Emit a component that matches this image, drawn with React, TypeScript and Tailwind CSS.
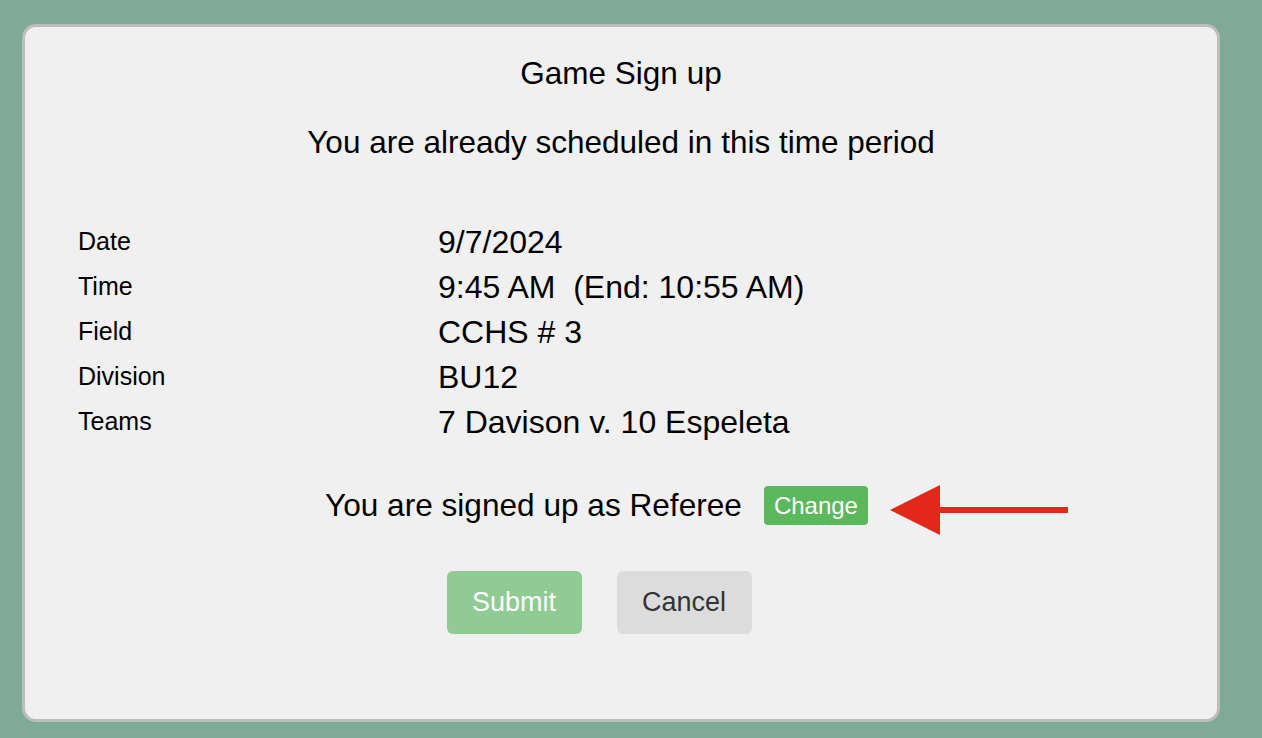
const rows = [
  { label: "Date", value: "9/7/2024" },
  { label: "Time", value: "9:45 AM\u00a0\u00a0(End: 10:55 AM)" },
  { label: "Field", value: "CCHS # 3" },
  { label: "Division", value: "BU12" },
  { label: "Teams", value: "7 Davison v. 10 Espeleta" },
];

export default function App() {
  return (
    <div className="min-h-[738px] w-full bg-[#7eaa97] pt-[24px] pb-[16px] pl-[22px] pr-[42px] font-['Liberation_Sans',Arial,sans-serif] text-black">
      <div className="relative h-[698px] rounded-[14px] border-[3px] border-[#bdbdbd] bg-[#f0f0f0] pt-[28px]">
        <h1 className="text-center text-[31.5px] leading-[36px]">Game Sign up</h1>
        <p className="mt-[33px] text-center text-[31.5px] leading-[36px]">
          You are already scheduled in this time period
        </p>

        <div className="mt-[59px] pl-[53px]">
          {rows.map((r) => (
            <div key={r.label} className="flex h-[45px] items-center">
              <span className="w-[360px] text-[25px]">{r.label}</span>
              <span className="text-[32px] whitespace-pre">{r.value}</span>
            </div>
          ))}
        </div>

        <div className="mt-[42px] flex h-[39px] items-center pl-[300px]">
          <span className="text-[31.6px]">You are signed up as Referee</span>
          <button className="ml-[22px] h-[39px] rounded-[4px] bg-[#5cb85c] px-[10px] text-[24px] text-white">
            Change
          </button>
        </div>

        <div className="mt-[46px] flex justify-center gap-[35px] pr-[44px]">
          <button className="h-[63px] w-[135px] rounded-[6px] bg-[#90cb93] text-[27px] text-white">
            Submit
          </button>
          <button className="h-[63px] w-[135px] rounded-[6px] bg-[#dcdcdc] text-[27px] text-[#333]">
            Cancel
          </button>
        </div>

        <svg
          className="absolute left-[865px] top-[455px]"
          width="180"
          height="56"
          viewBox="0 0 180 56"
        >
          <polygon points="0,28 50,3 50,53" fill="#e2271b" />
          <rect x="46" y="25" width="132" height="6" fill="#e2271b" />
        </svg>
      </div>
    </div>
  );
}
